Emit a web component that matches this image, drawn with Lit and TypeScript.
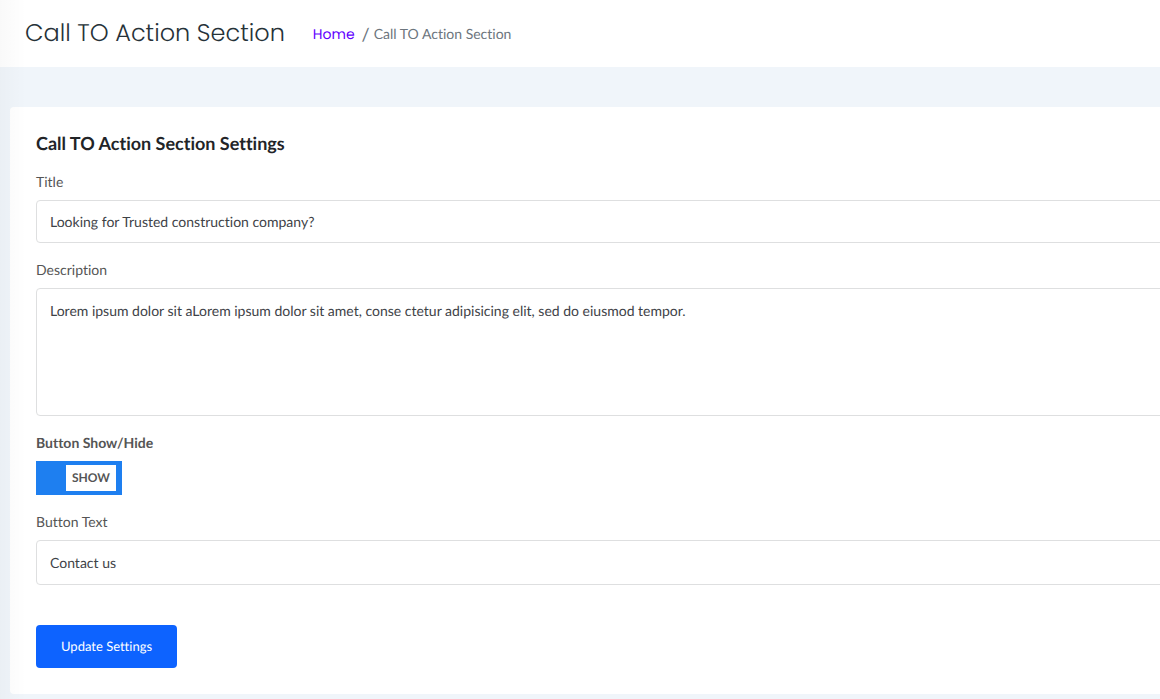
import { LitElement, html, css } from "lit";
import { customElement, state } from "lit/decorators.js";

@customElement("app-root")
export class AppRoot extends LitElement {
  static styles = css`
    :host {
      display: block;
      position: relative;
      min-height: 100vh;
      overflow: hidden;
      background: #f0f5fa;
      color: #555;
      font: 14px/20px Lato, sans-serif;
      font-variant-ligatures: none;
      text-rendering: geometricPrecision;
    }
    :host::after {
      content: "";
      position: absolute;
      inset: 0 auto 0 0;
      width: 26px;
      background: linear-gradient(to right, rgba(0, 0, 0, 0.025), rgba(0, 0, 0, 0));
      pointer-events: none;
    }
    * {
      box-sizing: border-box;
    }
    .top {
      display: flex;
      align-items: center;
      gap: 28px;
      min-height: 67px;
      padding: 0 25px;
      background: #fff;
    }
    .page-title {
      margin: 0;
      color: #263238;
      font-family: Poppins, Inter, sans-serif;
      font-size: 24px;
      line-height: 32px;
      font-weight: 300;
    }
    .crumbs {
      display: flex;
      align-items: center;
      gap: 7px;
      margin: 0;
      padding: 0;
      list-style: none;
      color: #6c757d;
    }
    .crumbs li {
      display: flex;
      align-items: center;
      gap: 4px;
    }
    .slash {
      font-size: 18px;
    }
    .home {
      color: #6200ff;
      font-family: Poppins, Inter, sans-serif;
      text-decoration: none;
    }
    .card {
      margin: 40px -36px 0 10px;
      padding: 24px 26px 26px;
      border-radius: 4px;
      background: #fff;
    }
    .heading {
      margin: 0 0 17px;
      color: #222427;
      font-size: 18px;
      line-height: 24px;
      font-weight: 700;
    }
    .form {
      display: grid;
      gap: 17px;
    }
    .field {
      display: grid;
      justify-items: start;
      gap: 8px;
    }
    .strong {
      font-weight: 700;
    }
    .control {
      display: block;
      width: 100%;
      min-height: 43px;
      margin: 0;
      padding: 10px 13px;
      border: 1px solid #dedfe0;
      border-radius: 4px;
      background: #fff;
      color: #3e4247;
      font: inherit;
      font-variant-ligatures: none;
      text-rendering: inherit;
      outline: none;
      resize: none;
    }
    .control:focus {
      border-color: #1e7ff0;
    }
    .control.tall {
      min-height: 45px;
    }
    textarea.control {
      height: 128px;
      padding-top: 12px;
    }
    .switch {
      display: flex;
      width: 86px;
      height: 34px;
      padding: 4px 6px;
      background: #1e7ff0;
      cursor: pointer;
    }
    .switch.on {
      justify-content: flex-end;
    }
    .switch input {
      appearance: none;
      width: 0;
      height: 0;
      margin: 0;
    }
    .knob {
      display: grid;
      place-items: center;
      width: 50px;
      background: #fff;
      font-size: 12px;
      font-weight: 700;
    }
    .submit {
      justify-self: start;
      margin-top: 23px;
      padding: 11px 25px 12px;
      border: 0;
      border-radius: 4px;
      background: #0d63ff;
      color: #fff;
      font: inherit;
      font-size: 13px;
      font-variant-ligatures: none;
      text-rendering: inherit;
      cursor: pointer;
    }
  `;

  @state() private shown = true;

  render() {
    return html`
      <header class="top">
        <h1 class="page-title">Call TO Action Section</h1>
        <nav aria-label="Breadcrumb">
          <ol class="crumbs">
            <li><a class="home" href="#">Home</a></li>
            <li><span class="slash">/</span>Call TO Action Section</li>
          </ol>
        </nav>
      </header>
      <main class="card">
        <h2 class="heading">Call TO Action Section Settings</h2>
        <form class="form" @submit=${(e: Event) => e.preventDefault()}>
          <div class="field">
            <label for="title">Title</label>
            <input class="control" id="title" type="text" value="Looking for Trusted construction company?" />
          </div>
          <div class="field">
            <label for="description">Description</label>
            <textarea
              class="control"
              id="description"
              .value=${"Lorem ipsum dolor sit aLorem ipsum dolor sit amet, conse ctetur adipisicing elit, sed do eiusmod tempor."}
            ></textarea>
          </div>
          <div class="field">
            <label class="strong" for="visible">Button Show/Hide</label>
            <label class="switch ${this.shown ? "on" : ""}">
              <input
                id="visible"
                type="checkbox"
                .checked=${this.shown}
                @change=${(e: Event) => (this.shown = (e.target as HTMLInputElement).checked)}
              />
              <span class="knob">${this.shown ? "SHOW" : "HIDE"}</span>
            </label>
          </div>
          <div class="field">
            <label for="button-text">Button Text</label>
            <input class="control tall" id="button-text" type="text" value="Contact us" />
          </div>
          <button class="submit" type="submit">Update Settings</button>
        </form>
      </main>
    `;
  }
}
